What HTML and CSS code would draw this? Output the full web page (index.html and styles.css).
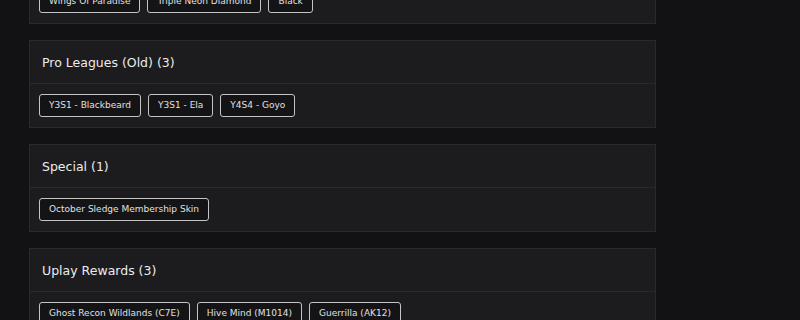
FILE: index.html
```html
<!DOCTYPE html>
<html lang="en">
<head>
    <meta charset="UTF-8">
    <meta name="viewport" content="width=device-width, initial-scale=1.0">
    <title>Skins</title>
    <link rel="stylesheet" href="styles.css">
</head>
<body>
    <div class="container">
        <div class="card">
            <div class="card-header">
                <h2>Elite &amp; Bundles (3)</h2>
            </div>
            <div class="card-body">
                <span class="chip">Wings Of Paradise</span>
                <span class="chip">Triple Neon Diamond</span>
                <span class="chip">Black</span>
            </div>
        </div>

        <div class="card">
            <div class="card-header">
                <h2>Pro Leagues (Old) (3)</h2>
            </div>
            <div class="card-body">
                <span class="chip">Y3S1 - Blackbeard</span>
                <span class="chip">Y3S1 - Ela</span>
                <span class="chip">Y4S4 - Goyo</span>
            </div>
        </div>

        <div class="card">
            <div class="card-header">
                <h2>Special (1)</h2>
            </div>
            <div class="card-body">
                <span class="chip">October Sledge Membership Skin</span>
            </div>
        </div>

        <div class="card">
            <div class="card-header">
                <h2>Uplay Rewards (3)</h2>
            </div>
            <div class="card-body">
                <span class="chip">Ghost Recon Wildlands (C7E)</span>
                <span class="chip">Hive Mind (M1014)</span>
                <span class="chip">Guerrilla (AK12)</span>
            </div>
        </div>
    </div>
</body>
</html>
```

FILE: styles.css
```css
body {
    font-family: "DejaVu Sans", sans-serif;
    margin: 0;
    padding: 0;
    background-color: #121114;
    color: #e6e6e6;
}

.container {
    width: 627px;
    margin: -64px 0 0 29px;
    display: flex;
    flex-direction: column;
    gap: 16px;
}

.card {
    background-color: #1c1b1e;
    border: 1px solid #2a292c;
}

.card-header {
    height: 42px;
    display: flex;
    align-items: center;
    padding: 0 12px;
    border-bottom: 1px solid #2a292c;
}

.card-header h2 {
    margin: 0;
    font-size: 12.5px;
    font-weight: 500;
    color: #ececec;
}

.card-body {
    height: 43px;
    padding: 0 9px;
    display: flex;
    align-items: center;
    gap: 7px;
}

.chip {
    font-size: 9px;
    line-height: 13px;
    padding: 4px 9px;
    border: 1px solid #c4c4c4;
    border-radius: 3px;
    background-color: #141316;
    color: #e0e0e0;
}
```
